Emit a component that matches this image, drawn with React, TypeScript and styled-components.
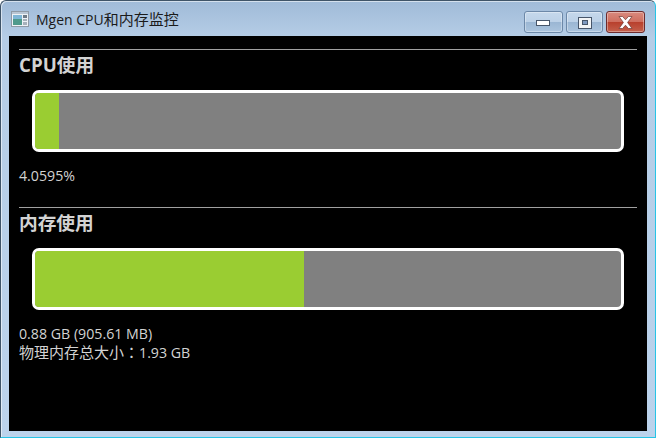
import React from "react";
import styled, { createGlobalStyle } from "styled-components";

const GlobalStyle = createGlobalStyle`
  html, body {
    margin: 0;
    padding: 0;
    background: #fff;
  }
`;

const uiFont = `"Open Sans", "Noto Sans", "Noto Sans CJK SC", sans-serif`;

export default function App() {
  return (
    <>
      <GlobalStyle />
      <Window>
        <TitleBar>
          <AppIcon viewBox="0 0 18 16" width="18" height="16">
            <rect x="0.5" y="0.5" width="17" height="15" fill="#eef2f6" stroke="#8f9aa6" />
            <rect x="1" y="1" width="16" height="2" fill="#b9c6d4" />
            <rect x="2" y="4" width="9" height="10" fill="#4f9a8c" />
            <rect x="2" y="4" width="9" height="4" fill="#7fb6d6" />
            <rect x="12" y="4" width="4" height="3" fill="#6e7a86" />
            <rect x="12" y="8" width="4" height="2" fill="#a7b1bb" />
            <rect x="12" y="11" width="4" height="3" fill="#a7b1bb" />
          </AppIcon>
          <Title>
            Mgen CPU<Cjk>和内存监控</Cjk>
          </Title>
          <Controls>
            <CaptionButton>
              <svg width="15" height="7" viewBox="0 0 15 7">
                <rect x="0.5" y="0.5" width="13" height="5" fill="#fff" stroke="#47566a" />
              </svg>
            </CaptionButton>
            <MaxButton>
              <svg width="14" height="12" viewBox="0 0 14 12">
                <rect x="0.5" y="0.5" width="13" height="11" fill="#f2f4f6" stroke="#47566a" />
                <rect x="4.5" y="3.5" width="5" height="4" fill="#7f9ac0" stroke="#47566a" />
              </svg>
            </MaxButton>
            <CloseButton>
              <svg width="15" height="13" viewBox="0 0 15 13">
                <path
                  d="M1 .5h3.6L7.5 3.8 10.4.5H14L9.6 6.5l4.4 6h-3.6L7.5 9.2 4.6 12.5H1l4.4-6z"
                  fill="#fff"
                  stroke="#6d3a34"
                  strokeWidth="0.7"
                />
              </svg>
            </CloseButton>
          </Controls>
        </TitleBar>
        <Content>
          <Section>
            <Heading>CPU使用</Heading>
            <Track>
              <Fill style={{ width: `${(24 / 586) * 100}%` }} />
            </Track>
            <Info>4.0595%</Info>
          </Section>
          <MemorySection>
            <Heading>内存使用</Heading>
            <Track>
              <Fill style={{ width: `${(269 / 586) * 100}%` }} />
            </Track>
            <Info>
              0.88 GB (905.61 MB)
              <br />
              <Cjk>
                物理内存总大小<Colon>：</Colon>
              </Cjk>
              1.93 GB
            </Info>
          </MemorySection>
        </Content>
      </Window>
    </>
  );
}

const Window = styled.div`
  box-sizing: border-box;
  width: 656px;
  height: 438px;
  display: flex;
  flex-direction: column;
  overflow: hidden;
  padding: 0 8px 6px 8px;
  border-radius: 6px 6px 0 0;
  border: 1px solid #3f5468;
  border-width: 1px 1px 0 1px;
  border-right-color: #27c4e6;
  border-bottom: 1px solid #27c4e6;
  background: linear-gradient(180deg, #a0bbd8 0px, #b5cde6 36px, #bcd3ec 100%);
  box-shadow: inset 1px 1px 0 rgba(255, 255, 255, 0.55);
`;

const TitleBar = styled.div`
  height: 35px;
  flex: none;
  display: flex;
  align-items: center;
  gap: 7px;
  margin-left: 2px;
`;

const AppIcon = styled.svg`
  flex: none;
`;

const Title = styled.div`
  font-family: ${uiFont};
  font-size: 14px;
  color: #1a1a1a;
  flex: 1;
  white-space: nowrap;
`;

const Cjk = styled.span`
  font-size: 15px;
`;

const Colon = styled.span`
  font-family: "Noto Sans CJK TC", sans-serif;
`;

const Controls = styled.div`
  display: flex;
  gap: 3px;
  align-self: flex-start;
  margin-top: 10px;
  margin-right: 2px;
`;

const CaptionButton = styled.div`
  box-sizing: border-box;
  width: 39px;
  height: 22px;
  display: flex;
  align-items: center;
  justify-content: center;
  padding-top: 3px;
  border: 1px solid #6c88a8;
  border-radius: 3px;
  background: linear-gradient(180deg, #c5d8ec 0%, #bcd1e7 48%, #9ab6d3 50%, #abc4de 100%);
  box-shadow: inset 0 0 0 1px rgba(255, 255, 255, 0.35);
`;

const MaxButton = styled(CaptionButton)`
  width: 37px;
  padding-top: 1px;
`;

const CloseButton = styled(CaptionButton)`
  padding-top: 1px;
  border-color: #6d2a2c;
  background: linear-gradient(180deg, #d98a7e 0%, #cf6f60 48%, #b83f2c 50%, #c4604c 100%);
`;

const Content = styled.div`
  flex: 1;
  background: #000;
  padding: 13px 10px 0;
  font-family: ${uiFont};
  color: #d3d3d3;
`;

const Section = styled.section`
  border-top: 1px solid #a0a0a0;
`;

const MemorySection = styled(Section)`
  margin-top: 22px;
`;

const Heading = styled.h2`
  margin: 0;
  padding-top: 4px;
  font-size: 18.7px;
  line-height: 22px;
  font-weight: 700;
`;

const Track = styled.div`
  box-sizing: border-box;
  height: 62px;
  margin: 14px 13px 0;
  border: 3px solid #fff;
  border-radius: 7px;
  background: #808080;
  overflow: hidden;
`;

const Fill = styled.div`
  height: 100%;
  background: #9acd32;
`;

const Info = styled.div`
  margin-top: 15px;
  font-size: 14.2px;
  line-height: 18px;
`;
